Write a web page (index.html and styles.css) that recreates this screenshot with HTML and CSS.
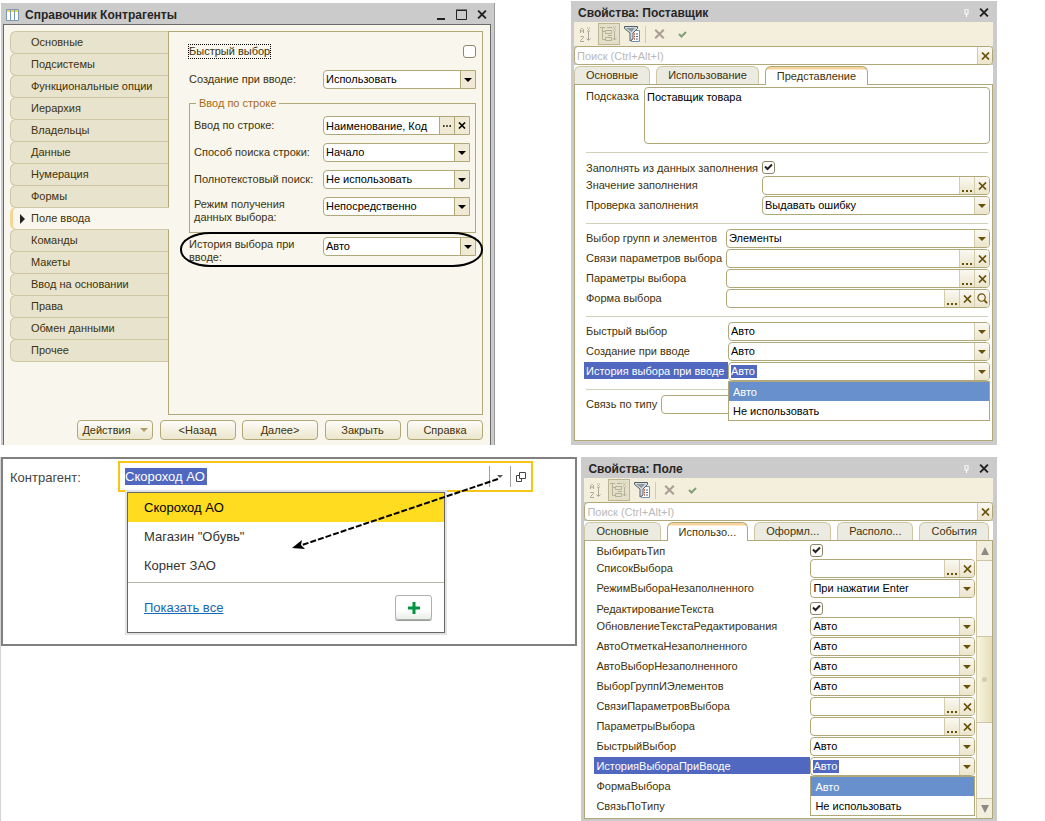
FILE: index.html
```html
<!DOCTYPE html>
<html lang="ru">
<head>
<meta charset="utf-8">
<title>История выбора при вводе</title>
<link rel="stylesheet" href="styles.css">
</head>
<body>
<svg class="sprite" aria-hidden="true">
  <symbol id="i-down" viewBox="0 0 8 4"><path d="M0 0h8L4 4z" fill="currentColor"/></symbol>
  <symbol id="i-x" viewBox="0 0 9 8"><path d="M1 .5l7 7M8 .5l-7 7" stroke="currentColor" stroke-width="1.700" fill="none"/></symbol>
  <symbol id="i-dots" viewBox="0 0 10 2"><path d="M0 0h2v2H0zM4 0h2v2H4zM8 0h2v2H8z" fill="currentColor"/></symbol>
  <symbol id="i-lens" viewBox="0 0 12 12"><circle cx="5" cy="5" r="4" fill="none" stroke="currentColor" stroke-width="1.3"/><path d="M8 8l3 3" stroke="currentColor" stroke-width="2"/></symbol>
  <symbol id="i-pin" viewBox="0 0 5 8"><path d="M1 0h3v5H1z" fill="none" stroke="#fff"/><path d="M2 5h1v3H2z" fill="#fff"/></symbol>
  <symbol id="i-sort" viewBox="0 0 12 15"><g fill="none" stroke="#aaa69a"><path d="M.5 6V2.5l1-1h1l1 1V6M.5 4h3M.5 9.500h3v1l-3 3v1h3.500"/><path d="M8.500 4v9M7 1h1M9 1h1M8 2.500h1M7 4h1M9 4h1M6.500 11.500l2 2 2-2"/></g></symbol>
  <symbol id="i-tree" viewBox="0 0 18 16"><g fill="none" stroke="#b7b098"><path d="M0 1.500h5M2.500 2v11.500M2.500 5.500H5M2.500 13.500H5M5.500 4.500h6v3h-6zM5.500 11.500h6v3h-6zM7 1.500h5M8 9.500h4"/><path d="M14.500 5v9M13 1h1M15 1h1M14 2.500h1M13 4h1M15 4h1M12.500 12l2 2 2-2"/></g></symbol>
  <symbol id="i-filter" viewBox="0 0 17 16"><path d="M7.500 4.500h8v11h-8z" fill="#fff" stroke="#6c91b3"/><path d="M10 8h1M10 10.500h1M10 13h1" stroke="#d0452f" stroke-width="1.500"/><path d="M12 8h2M12 10.500h2M12 13h2" stroke="#3b6f9e"/><path d="M.5.500h13v2L9 7v6l-3 2V7L.5 2.500z" fill="#d4dadc" stroke="#52606a"/><path d="M2 2h9L7.500 6z" fill="#8b989f"/></symbol>
  <symbol id="i-check" viewBox="0 0 9 7"><path d="M1 3l2.500 2.500L8 1" stroke="currentColor" stroke-width="2" fill="none"/></symbol>
</svg>

<main class="page">
  <div class="row row-top">

    <section class="window wizard">
      <header class="titlebar">
        <svg class="app-icon" width="13" height="12" viewBox="0 0 13 12"><path d="M.5.500h12v11H.5z" fill="#fff" stroke="#7b98b3"/><path d="M4.500 0v12M8.500 0v12" stroke="#7b98b3"/><path d="M1 1h3v2H1zM5 1h3v2H5zM9 1h3v2H9z" fill="#f3d84c"/></svg>
        <h1>Справочник Контрагенты</h1>
        <button class="win-btn" aria-label="Свернуть"><svg width="9" height="11" viewBox="0 0 9 11"><path d="M0 9h8v2H0z" fill="#222"/></svg></button>
        <button class="win-btn" aria-label="Развернуть"><svg width="11" height="11" viewBox="0 0 11 11"><path d="M.5 1.500h10v9H.5zM0 1h11" fill="none" stroke="#222"/></svg></button>
        <button class="win-btn" aria-label="Закрыть"><svg width="10" height="9"><use href="#i-x"/></svg></button>
      </header>
      <div class="wizard-body">
        <div class="wizard-main">
          <nav class="side">
            <button>Основные</button>
            <button>Подсистемы</button>
            <button>Функциональные опции</button>
            <button>Иерархия</button>
            <button>Владельцы</button>
            <button>Данные</button>
            <button>Нумерация</button>
            <button>Формы</button>
            <button class="current"><svg width="5" height="10" viewBox="0 0 5 10"><path d="M0 0l5 5-5 5z" fill="#222"/></svg>Поле ввода</button>
            <button>Команды</button>
            <button>Макеты</button>
            <button>Ввод на основании</button>
            <button>Права</button>
            <button>Обмен данными</button>
            <button>Прочее</button>
          </nav>
          <div class="panel">
            <div class="quick"><label for="a-quick">Быстрый выбор</label><input type="checkbox" class="tick" id="a-quick"></div>
            <div class="line"><label for="a-create">Создание при вводе:</label>
              <div class="field"><select id="a-create"><option>Использовать</option></select><span class="cell arrow"><svg width="8" height="4"><use href="#i-down"/></svg></span></div></div>
            <fieldset>
              <legend>Ввод по строке</legend>
              <div class="line"><label for="a-str">Ввод по строке:</label>
                <div class="field"><input type="text" id="a-str" value="Наименование, Код"><button class="cell" aria-label="Выбрать"><svg width="8" height="2"><use href="#i-dots"/></svg></button><button class="cell" aria-label="Очистить"><svg width="8" height="7"><use href="#i-x"/></svg></button></div></div>
              <div class="line"><label for="a-find">Способ поиска строки:</label>
                <div class="field"><select id="a-find"><option>Начало</option></select><span class="cell arrow"><svg width="8" height="4"><use href="#i-down"/></svg></span></div></div>
              <div class="line"><label for="a-full">Полнотекстовый поиск:</label>
                <div class="field"><select id="a-full"><option>Не использовать</option></select><span class="cell arrow"><svg width="8" height="4"><use href="#i-down"/></svg></span></div></div>
              <div class="line two"><label for="a-mode">Режим получения<br>данных выбора:</label>
                <div class="field"><select id="a-mode"><option>Непосредственно</option></select><span class="cell arrow"><svg width="8" height="4"><use href="#i-down"/></svg></span></div></div>
            </fieldset>
            <div class="line two circled"><label for="a-hist">История выбора при<br>вводе:</label>
              <div class="field"><select id="a-hist"><option>Авто</option></select><span class="cell arrow"><svg width="8" height="4"><use href="#i-down"/></svg></span></div></div>
          </div>
        </div>
        <footer class="actions">
          <button>Действия <svg width="8" height="4"><use href="#i-down"/></svg></button>
          <button>&lt;Назад</button>
          <button>Далее&gt;</button>
          <button>Закрыть</button>
          <button>Справка</button>
        </footer>
      </div>
    </section>

    <section class="window props">
      <header class="titlebar">
        <h2>Свойства: Поставщик</h2>
        <svg class="pin" width="5" height="8"><use href="#i-pin"/></svg>
        <button class="win-btn" aria-label="Закрыть"><svg width="10" height="9"><use href="#i-x"/></svg></button>
      </header>
      <div class="toolbar">
        <button aria-label="Сортировать"><svg width="12" height="15"><use href="#i-sort"/></svg></button>
        <button class="pressed" aria-label="По категориям"><svg width="18" height="16"><use href="#i-tree"/></svg></button>
        <button aria-label="Отбор"><svg width="17" height="16"><use href="#i-filter"/></svg></button>
        <i class="sep"></i>
        <button class="no" aria-label="Отменить"><svg width="11" height="10"><use href="#i-x"/></svg></button>
        <button class="yes" aria-label="Применить"><svg width="9" height="7"><use href="#i-check"/></svg></button>
      </div>
      <div class="field search"><input type="text" placeholder="Поиск (Ctrl+Alt+I)" aria-label="Поиск"><button class="cell" aria-label="Очистить"><svg width="9" height="8"><use href="#i-x"/></svg></button></div>
      <nav class="tabs"><button>Основные</button><button>Использование</button><button class="current">Представление</button></nav>
      <div class="sheet sheet-one">
        <div class="hint"><label for="b-hint">Подсказка</label><textarea id="b-hint">Поставщик товара</textarea></div>
        <hr>
        <div class="group g-fill">
          <div class="prop tickrow"><label for="b-fill">Заполнять из данных заполнения</label><input type="checkbox" class="tick" id="b-fill" checked></div>
          <div class="prop"><label for="b-val">Значение заполнения</label><div class="field"><input type="text" id="b-val"><button class="cell dots" aria-label="Выбрать"><svg width="10" height="2"><use href="#i-dots"/></svg></button><button class="cell" aria-label="Очистить"><svg width="9" height="8"><use href="#i-x"/></svg></button></div></div>
          <div class="prop"><label for="b-chk">Проверка заполнения</label><div class="field"><select id="b-chk"><option>Выдавать ошибку</option></select><span class="cell arrow"><svg width="8" height="4"><use href="#i-down"/></svg></span></div></div>
        </div>
        <hr>
        <div class="group g-choice">
          <div class="prop"><label for="b-grp">Выбор групп и элементов</label><div class="field"><select id="b-grp"><option>Элементы</option></select><span class="cell arrow"><svg width="8" height="4"><use href="#i-down"/></svg></span></div></div>
          <div class="prop"><label for="b-lnk">Связи параметров выбора</label><div class="field"><input type="text" id="b-lnk"><button class="cell dots" aria-label="Выбрать"><svg width="10" height="2"><use href="#i-dots"/></svg></button><button class="cell" aria-label="Очистить"><svg width="9" height="8"><use href="#i-x"/></svg></button></div></div>
          <div class="prop"><label for="b-par">Параметры выбора</label><div class="field"><input type="text" id="b-par"><button class="cell dots" aria-label="Выбрать"><svg width="10" height="2"><use href="#i-dots"/></svg></button><button class="cell" aria-label="Очистить"><svg width="9" height="8"><use href="#i-x"/></svg></button></div></div>
          <div class="prop"><label for="b-frm">Форма выбора</label><div class="field"><input type="text" id="b-frm"><button class="cell dots" aria-label="Выбрать"><svg width="10" height="2"><use href="#i-dots"/></svg></button><button class="cell" aria-label="Очистить"><svg width="9" height="8"><use href="#i-x"/></svg></button><button class="cell" aria-label="Открыть"><svg width="11" height="11"><use href="#i-lens"/></svg></button></div></div>
        </div>
        <hr>
        <div class="group g-input">
          <div class="prop"><label for="b-quick">Быстрый выбор</label><div class="field"><select id="b-quick"><option>Авто</option></select><span class="cell arrow"><svg width="8" height="4"><use href="#i-down"/></svg></span></div></div>
          <div class="prop"><label for="b-create">Создание при вводе</label><div class="field"><select id="b-create"><option>Авто</option></select><span class="cell arrow"><svg width="8" height="4"><use href="#i-down"/></svg></span></div></div>
          <div class="prop chosen"><label for="b-hist">История выбора при вводе</label><div class="field"><input type="text" class="marked" id="b-hist" value="Авто"><button class="cell" aria-label="Список"><svg width="8" height="4"><use href="#i-down"/></svg></button>
            <ul class="menu"><li class="on">Авто</li><li>Не использовать</li></ul></div></div>
        </div>
        <hr>
        <div class="group g-type">
          <div class="prop"><label for="b-type">Связь по типу</label><div class="field"><input type="text" id="b-type"></div></div>
        </div>
      </div>
    </section>
  </div>

  <div class="row row-bottom">
    <section class="frame">
      <label for="c-agent">Контрагент:</label>
      <div class="agent">
        <input type="text" id="c-agent" value="Скороход АО">
        <button class="agent-btn" aria-label="Список"><svg width="6" height="3" viewBox="0 0 8 4"><use href="#i-down"/></svg></button>
        <button class="agent-btn" aria-label="Открыть"><svg width="10" height="10" viewBox="0 0 10 10"><path d="M3.500.500h6v6h-6zM3 3.500H.5v6h5V7" fill="none" stroke="#444"/></svg></button>
        <div class="choices">
          <ul><li class="on">Скороход АО</li><li>Магазин "Обувь"</li><li>Корнет ЗАО</li></ul>
          <div class="choices-foot"><a href="#all">Показать все</a><button aria-label="Создать"><svg width="12" height="12" viewBox="0 0 12 12"><path d="M4.500 0h3v4.500H12v3H7.500V12h-3V7.500H0v-3h4.500z" fill="#009640"/></svg></button></div>
        </div>
        <svg class="pointer" width="208" height="76" viewBox="0 0 208 76"><path d="M206 2L10 68" stroke="#000" stroke-width="2" stroke-dasharray="6 2" fill="none"/><path d="M0 71l10-8-1 5 4 4z" fill="#000"/></svg>
      </div>
    </section>

    <section class="window props second">
      <header class="titlebar">
        <h2>Свойства: Поле</h2>
        <svg class="pin" width="5" height="8"><use href="#i-pin"/></svg>
        <button class="win-btn" aria-label="Закрыть"><svg width="10" height="9"><use href="#i-x"/></svg></button>
      </header>
      <div class="toolbar">
        <button aria-label="Сортировать"><svg width="12" height="15"><use href="#i-sort"/></svg></button>
        <button class="pressed" aria-label="По категориям"><svg width="18" height="16"><use href="#i-tree"/></svg></button>
        <button aria-label="Отбор"><svg width="17" height="16"><use href="#i-filter"/></svg></button>
        <i class="sep"></i>
        <button class="no" aria-label="Отменить"><svg width="11" height="10"><use href="#i-x"/></svg></button>
        <button class="yes" aria-label="Применить"><svg width="9" height="7"><use href="#i-check"/></svg></button>
      </div>
      <div class="field search"><input type="text" placeholder="Поиск (Ctrl+Alt+I)" aria-label="Поиск"><button class="cell" aria-label="Очистить"><svg width="9" height="8"><use href="#i-x"/></svg></button></div>
      <nav class="tabs"><button>Основные</button><button class="current">Использо...</button><button>Оформл...</button><button>Располо...</button><button>События</button></nav>
      <div class="sheet sheet-two">
        <div class="group g-field">
          <div class="prop tickrow"><label for="d-type">ВыбиратьТип</label><input type="checkbox" class="tick" id="d-type" checked></div>
          <div class="prop"><label for="d-list">СписокВыбора</label><div class="field"><input type="text" id="d-list"><button class="cell dots" aria-label="Выбрать"><svg width="10" height="2"><use href="#i-dots"/></svg></button><button class="cell" aria-label="Очистить"><svg width="9" height="8"><use href="#i-x"/></svg></button></div></div>
          <div class="prop"><label for="d-mode">РежимВыбораНезаполненного</label><div class="field"><select id="d-mode"><option>При нажатии Enter</option></select><span class="cell arrow"><svg width="8" height="4"><use href="#i-down"/></svg></span></div></div>
          <div class="prop tickrow"><label for="d-edit">РедактированиеТекста</label><input type="checkbox" class="tick" id="d-edit" checked></div>
          <div class="prop"><label for="d-upd">ОбновлениеТекстаРедактирования</label><div class="field"><select id="d-upd"><option>Авто</option></select><span class="cell arrow"><svg width="8" height="4"><use href="#i-down"/></svg></span></div></div>
          <div class="prop"><label for="d-mark">АвтоОтметкаНезаполненного</label><div class="field"><select id="d-mark"><option>Авто</option></select><span class="cell arrow"><svg width="8" height="4"><use href="#i-down"/></svg></span></div></div>
          <div class="prop"><label for="d-auto">АвтоВыборНезаполненного</label><div class="field"><select id="d-auto"><option>Авто</option></select><span class="cell arrow"><svg width="8" height="4"><use href="#i-down"/></svg></span></div></div>
          <div class="prop"><label for="d-grp">ВыборГруппИЭлементов</label><div class="field"><select id="d-grp"><option>Авто</option></select><span class="cell arrow"><svg width="8" height="4"><use href="#i-down"/></svg></span></div></div>
          <div class="prop"><label for="d-lnk">СвязиПараметровВыбора</label><div class="field"><input type="text" id="d-lnk"><button class="cell dots" aria-label="Выбрать"><svg width="10" height="2"><use href="#i-dots"/></svg></button><button class="cell" aria-label="Очистить"><svg width="9" height="8"><use href="#i-x"/></svg></button></div></div>
          <div class="prop"><label for="d-par">ПараметрыВыбора</label><div class="field"><input type="text" id="d-par"><button class="cell dots" aria-label="Выбрать"><svg width="10" height="2"><use href="#i-dots"/></svg></button><button class="cell" aria-label="Очистить"><svg width="9" height="8"><use href="#i-x"/></svg></button></div></div>
          <div class="prop"><label for="d-quick">БыстрыйВыбор</label><div class="field"><select id="d-quick"><option>Авто</option></select><span class="cell arrow"><svg width="8" height="4"><use href="#i-down"/></svg></span></div></div>
          <div class="prop chosen"><label for="d-hist">ИсторияВыбораПриВводе</label><div class="field"><input type="text" class="marked" id="d-hist" value="Авто"><button class="cell" aria-label="Список"><svg width="8" height="4"><use href="#i-down"/></svg></button>
            <ul class="menu"><li class="on">Авто</li><li>Не использовать</li></ul></div></div>
          <div class="prop"><span class="name">ФормаВыбора</span></div>
          <div class="prop"><span class="name">СвязьПоТипу</span></div>
        </div>
        <div class="scroll" aria-hidden="true">
          <span class="scroll-end"><svg width="8" height="8" viewBox="0 0 8 8"><path d="M4 0l4 8H0z" fill="#8c8a84"/></svg></span>
          <span class="thumb"></span>
          <span class="scroll-end"><svg width="8" height="8" viewBox="0 0 8 8"><path d="M4 8l4-8H0z" fill="#8c8a84"/></svg></span>
        </div>
      </div>
    </section>
  </div>
</main>
</body>
</html>
```

FILE: styles.css
```css
:root {
  --olive: #b0a878;
  --brown: #40320c;
  --icon: #67500a;
  --gray: #cbcbcb;
  --select: #5068c0;
}

* { box-sizing: border-box; }

body {
  margin: 0;
  background: #fff;
  color: var(--brown);
  font: 11px/13px "Liberation Sans", Arial, sans-serif;
}

button, input, select, textarea { font: inherit; color: inherit; margin: 0; border-radius: 0; }
button { padding: 0; border: 0; background: none; }
svg { display: block; flex: none; }
ul { margin: 0; padding: 0; list-style: none; }
.sprite { position: absolute; width: 0; height: 0; }

.page { padding-right: 48px; }
.row { display: grid; }
.row-top { grid-template-columns: minmax(0, 494fr) minmax(0, 426fr); gap: 77px; margin-bottom: 12px; }
.row-bottom { grid-template-columns: minmax(0, 577fr) minmax(0, 416fr); gap: 4px; align-items: start; border-left: 1px solid #d4d4d4; }

/* Windows */
.window { display: flex; flex-direction: column; background: var(--gray); }
.titlebar { display: flex; align-items: center; color: #262626; }
.titlebar h1, .titlebar h2 { flex: 1; margin: 0; font-size: 12px; line-height: 16px; }
.win-btn { display: grid; place-items: center; color: #222; }

/* Fields */
.field {
  display: flex;
  position: relative;
  flex: 1;
  min-width: 0;
  height: 19px;
  background: #fff;
  border: 1px solid var(--olive);
  border-radius: 4px;
  color: #000;
}
.field input, .field select {
  flex: 1;
  width: 0;
  min-width: 0;
  height: 17px;
  padding: 0 2px;
  border: 0;
  background: none;
  appearance: none;
  outline: 0;
}
.cell {
  display: grid;
  place-items: center;
  width: 15px;
  border-left: 1px solid #d3ccac;
  background: linear-gradient(#faf8f2, #ece5cb);
  color: var(--icon);
}
.cell:last-of-type { border-radius: 0 3px 3px 0; }
.arrow { pointer-events: none; }
.dots { align-items: end; padding-bottom: 2px; }
.field input.marked {
  flex: none;
  width: 26px;
  height: 13px;
  margin: 2px auto 2px 2px;
  padding: 0;
  background: var(--select);
  color: #fff;
}

.tick {
  appearance: none;
  width: 13px;
  height: 13px;
  border: 1px solid #8d8768;
  border-radius: 3px;
  background: #fff;
}
.tick:checked {
  background: #fff url("data:image/svg+xml,%3Csvg xmlns='http://www.w3.org/2000/svg' viewBox='0 0 9 8'%3E%3Cpath d='M1 3.500l2.500 2.500L8 1.500' fill='none' stroke='%23222' stroke-width='2'/%3E%3C/svg%3E") center / 9px 8px no-repeat;
}

/* Catalogue window */
.wizard { margin: 3px 0 0 1px; border: solid var(--gray); border-width: 0 3px 0 2px; box-shadow: 1px 0 0 -0px #9a9a9a; }
.wizard .titlebar { height: 21px; padding: 2px 4px 0 3px; gap: 10px; }
.wizard .app-icon { margin-right: -4px; }
.wizard-body {
  display: flex;
  flex: 1;
  flex-direction: column;
  padding: 6px 7px 5px 6px;
  background: #f8f6ed;
  border: 1px solid #6a6a6a;
  border-bottom: 0;
}
.wizard-main { display: flex; flex: 1; }
.side { width: 158px; flex: none; }
.side button {
  display: flex;
  align-items: center;
  width: 100%;
  height: 23px;
  margin-bottom: -1px;
  padding-left: 20px;
  background: #e8e3cc;
  border: 1px solid #cfc7a4;
  border-right: 0;
  border-radius: 6px 0 0 6px;
}
.side .current {
  position: relative;
  width: 159px;
  padding-left: 7px;
  gap: 6px;
  background: #f8f6ed;
  border-left: 3px solid #f3d596;
}
.panel { flex: 1; padding: 12px 6px 0 20px; border: 1px solid var(--olive); }
.quick { display: flex; justify-content: space-between; align-items: center; height: 15px; }
.quick label { outline: 1px dotted #000; }
.line { display: grid; grid-template: 19px / 134px 1fr; align-items: center; }
.line .cell { background: #f0ead4; border-color: var(--olive); border-radius: 0; color: #000; }
.line .field { border-radius: 4px 0 0 4px; }
.two label { padding-top: 8px; }
.quick + .line { margin-top: 11px; }
fieldset {
  display: grid;
  gap: 8px;
  min-width: 0;
  margin: 8px 0 4px;
  padding: 6px 5px 16px 4px;
  border: 1px solid var(--olive);
}
fieldset .line { grid-template-columns: 129px 1fr; }
legend { padding: 0 3px; margin-left: 2px; color: #a86a14; }
.circled { position: relative; }
.circled::after {
  content: "";
  position: absolute;
  inset: -5px -7px -11px -9px;
  border: 2px solid #000;
  border-radius: 30px / 17px;
  pointer-events: none;
}
.actions { display: flex; justify-content: space-between; margin: 5px 0 0 67px; }
.actions button {
  display: flex;
  align-items: center;
  justify-content: center;
  gap: 9px;
  width: 76px;
  height: 20px;
  border: 1px solid var(--olive);
  border-radius: 4px;
  background: linear-gradient(#fdfcf8, #ece6cc);
}
.actions svg { color: #b09c68; }

/* Property windows */
.props { margin-top: 1px; border: solid var(--gray); border-width: 0 4px 4px 3px; box-shadow: inset 0 0 0 0 #8a8a8a; }
.props .titlebar { height: 21px; padding: 2px 4px 0 4px; }
.pin { margin-right: 10px; }
.toolbar { display: flex; align-items: center; height: 24px; padding: 0 5px; background: #f3efdc; }
.toolbar button { display: grid; place-items: center; width: 22px; height: 22px; }
.toolbar button:first-child { width: 14px; margin-right: 5px; }
.toolbar .pressed { background: #e4dfc8; border: 1px solid #bdb592; }
.toolbar button:nth-child(3) { width: 25px; }
.sep { width: 1px; height: 17px; margin-right: 2px; background: #d2cbb0; }
.no { color: #ac9d92; }
.yes { color: #7f9f76; margin-left: 1px; }
.search { flex: none; }
.search input::placeholder { color: #b9b9b9; opacity: 1; }
.tabs { display: flex; gap: 6px; padding-top: 1px; background: #fff; }
.tabs button {
  height: 18px;
  padding: 0 11px;
  border: 1px solid #cfc7a4;
  border-bottom: 0;
  border-radius: 6px 6px 0 0;
  background: #ecebe2;
}
.tabs .current {
  position: relative;
  height: 19px;
  margin-bottom: -1px;
  border-color: var(--olive);
  background: linear-gradient(#f6d49a 2px, #fff 3px);
}
.sheet { flex: 1; background: #fff; border: 1px solid var(--olive); }
.sheet-one { padding: 2px 2px 25px 11px; }
.sheet hr { height: 1px; margin: 7px 2px 5px 0; border: 0; background: #d3d0ba; }
.hint { display: flex; gap: 5px; padding-bottom: 1px; }
.hint label { padding-top: 3px; }
textarea {
  flex: 1;
  height: 57px;
  padding: 3px 2px;
  border: 1px solid var(--olive);
  border-radius: 4px;
  color: #000;
  resize: none;
}
.prop { display: grid; grid-template-columns: var(--name) minmax(0, 1fr); height: 20px; }
.prop label, .prop .name { height: 17px; line-height: 18px; margin-left: -2px; padding: 0 2px; white-space: nowrap; }
.tickrow { height: 18px; align-items: center; }
.g-fill { --name: 176px; }
.g-choice { --name: 140px; }
.g-input { --name: 142px; }
.g-type { --name: 75px; }
.g-field { --name: 214px; }
.chosen label { background: var(--select); color: #fff; }
.menu {
  position: absolute;
  z-index: 2;
  top: 18px;
  left: -1px;
  right: -1px;
  border: 1px solid var(--olive);
  background: #fff;
}
.menu li { height: 19px; padding-left: 4px; line-height: 20px; }
.menu .on { background: #6890cc; color: #fff; }

.second { margin-top: 0; }
.sheet-two { display: flex; }
.g-field { flex: 1; padding: 0 1px 1px 11px; min-width: 0; }
.scroll { display: flex; flex-direction: column; width: 16px; border-left: 1px solid #cdc5a3; background: #f8f7f1; }
.scroll-end { display: grid; place-items: center; height: 20px; border: solid #cdc5a3; border-width: 0 0 1px; background: #f3efdf; }
.scroll-end:last-child { border-width: 1px 0 0; }
.thumb { height: 87px; margin: 75px 0 auto; border: solid #cdc5a3; border-width: 1px 0; background: radial-gradient(circle, #d2cbb0 2px, transparent 3px), linear-gradient(90deg, #f7f3e2, #e7dfb8); }

/* Input with the choice list */
.frame {
  display: flex;
  align-items: flex-start;
  height: 189px;
  padding: 2px 42px 0 7px;
  border: 2px solid #808080;
  color: #444;
  font-size: 13px;
  line-height: 16px;
}
.frame > label { width: 108px; flex: none; padding-top: 9px; }
.agent { display: flex; position: relative; flex: 1; height: 31px; padding: 3px 0; border: 2px solid #f8c516; }
.agent input { width: 82px; height: 17px; margin: 2px auto 0 5px; padding: 0; border: 0; background: var(--select); color: #fff; }
.agent-btn { display: grid; place-items: center; width: 21px; border-left: 1px solid #a0a0a0; color: #555; }
.choices {
  position: absolute;
  top: 29px;
  left: 7px;
  right: 86px;
  border: 1px solid #666;
  background: #fff;
  box-shadow: 0 0 0 2px #e2e2e2;
  color: #333;
}
.choices li { height: 29px; padding-left: 16px; line-height: 29px; }
.choices .on { background: #ffdc20; color: #000; }
.choices ul { padding-bottom: 2px; border-bottom: 1px solid #b5b5aa; }
.choices-foot { display: flex; align-items: center; justify-content: space-between; height: 49px; padding: 0 12px 0 16px; }
.choices-foot a { color: #1468b4; }
.choices-foot button { display: grid; place-items: center; width: 37px; height: 25px; border: 1px solid #aeb0ac; border-radius: 3px; background: linear-gradient(#fff 60%, #ebeee9); box-shadow: 0 1px #999; }
.pointer { position: absolute; z-index: 3; top: 14px; right: 31px; pointer-events: none; }
```
